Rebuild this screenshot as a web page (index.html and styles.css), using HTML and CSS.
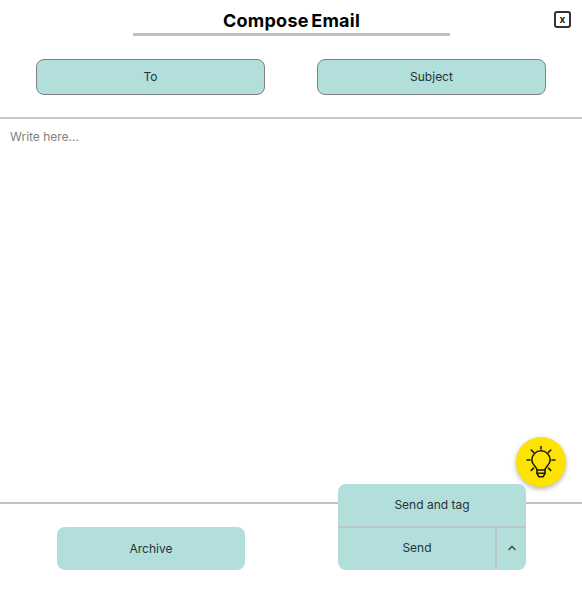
FILE: index.html
```html
<!DOCTYPE html>
<html lang="en">
<head>
    <meta charset="UTF-8">
    <meta name="viewport" content="width=device-width, initial-scale=1.0">
    <title>Compose Email</title>
    <link rel="stylesheet" href="styles.css">
</head>
<body>
    <div class="compose">
        <header class="compose-header">
            <h1 class="compose-title">Compose Email</h1>
            <button class="close-button" type="button" aria-label="Close">x</button>
        </header>

        <div class="fields">
            <button class="field-button" type="button">To</button>
            <button class="field-button" type="button">Subject</button>
        </div>

        <div class="message">Write here...</div>

        <footer class="compose-footer">
            <button class="archive-button" type="button">Archive</button>
            <div class="send-group">
                <button class="send-option" type="button">Send and tag</button>
                <div class="send-row">
                    <button class="send-main" type="button">Send</button>
                    <button class="send-toggle" type="button" aria-label="More send options">
                        <svg width="10" height="6" viewBox="0 0 10 6" fill="none" stroke="#4a5a5a" stroke-width="1.6">
                            <path d="M1.5 5 L5 1.5 L8.5 5"/>
                        </svg>
                    </button>
                </div>
            </div>
        </footer>

        <button class="tip-button" type="button" aria-label="Tips">
            <svg width="30" height="32" viewBox="0 0 30 32" fill="none" stroke="#1c1c10" stroke-width="1.6" stroke-linecap="round" stroke-linejoin="round">
                <path d="M15 0.5 V3"/>
                <path d="M5.2 4 L7.6 6.3"/>
                <path d="M24.8 4 L22.4 6.3"/>
                <path d="M1 14 H4"/>
                <path d="M26 14 H29"/>
                <path d="M5.2 24.4 L7.6 22.2"/>
                <path d="M24.8 24.4 L22.4 22.2"/>
                <path d="M11 24 C11 21 5.8 19 5.8 14 C5.8 8.8 10 4.8 15 4.8 C20 4.8 24.2 8.8 24.2 14 C24.2 19 19 21 19 24 Z"/>
                <path d="M11 24 V27.5 L13 30.8 H17 L19 27.5 V24"/>
                <path d="M11 27.2 H19"/>
            </svg>
        </button>
    </div>
</body>
</html>
```

FILE: styles.css
```css
* {
    box-sizing: border-box;
}

body {
    margin: 0;
    font-family: 'Inter', sans-serif;
    background-color: #ffffff;
    color: #263238;
}

button {
    font-family: inherit;
    color: inherit;
    cursor: pointer;
}

.compose {
    position: relative;
    display: flex;
    flex-direction: column;
    height: 100vh;
}

.compose-header {
    position: relative;
    display: flex;
    justify-content: center;
    padding-top: 9px;
}

.compose-title {
    width: 317px;
    height: 27px;
    margin: 0 0 0 1px;
    border-bottom: 3px solid #c0c0c0;
    font-size: 18px;
    line-height: 24px;
    font-weight: 700;
    letter-spacing: 0.25px;
    word-spacing: -2px;
    text-align: center;
    color: #000000;
}

.close-button {
    position: absolute;
    top: 11px;
    right: 11px;
    width: 17px;
    height: 17px;
    padding: 0;
    border: 2px solid #333333;
    border-radius: 3px;
    background-color: #ffffff;
    font-size: 10px;
    line-height: 11px;
    font-weight: 700;
    color: #222222;
}

.fields {
    display: flex;
    gap: 52px;
    padding: 23px 36px 22px;
    border-bottom: 2px solid #c8c8c8;
}

.field-button {
    width: 229px;
    height: 36px;
    padding: 0 0 2px;
    border: 1px solid #808080;
    border-radius: 8px;
    background-color: #b2dfdb;
    font-size: 12px;
}

.message {
    flex: 1;
    padding: 10px;
    font-size: 12px;
    line-height: 15px;
    color: #808080;
}

.compose-footer {
    display: flex;
    align-items: flex-end;
    justify-content: space-between;
    height: 87px;
    padding: 0 56px 19px 57px;
    border-top: 2px solid #c0c0c0;
}

.archive-button {
    width: 188px;
    height: 43px;
    border: none;
    border-radius: 8px;
    background-color: #b2dfdb;
    font-size: 12px;
}

.send-group {
    display: flex;
    flex-direction: column;
    width: 188px;
    height: 86px;
    border-radius: 8px;
    background-color: #b2dfdb;
    overflow: hidden;
}

.send-option {
    height: 44px;
    padding: 0 0 2px;
    border: none;
    border-bottom: 2px solid #bcc9c7;
    background: none;
    font-size: 12px;
}

.send-row {
    display: flex;
    flex: 1;
}

.send-main {
    flex: 1;
    padding: 0 0 4px 1px;
    border: none;
    background: none;
    font-size: 12px;
}

.send-toggle {
    display: flex;
    align-items: center;
    justify-content: center;
    width: 31px;
    padding: 0 0 2px;
    border: none;
    border-left: 2px solid #bcc9c7;
    background: none;
}

.tip-button {
    position: absolute;
    top: 437px;
    right: 16px;
    display: flex;
    align-items: center;
    justify-content: center;
    width: 50px;
    height: 50px;
    padding: 0;
    border: none;
    border-radius: 50%;
    background-color: #fce300;
    box-shadow: 0 2px 5px rgba(0, 0, 0, 0.3);
}
```
